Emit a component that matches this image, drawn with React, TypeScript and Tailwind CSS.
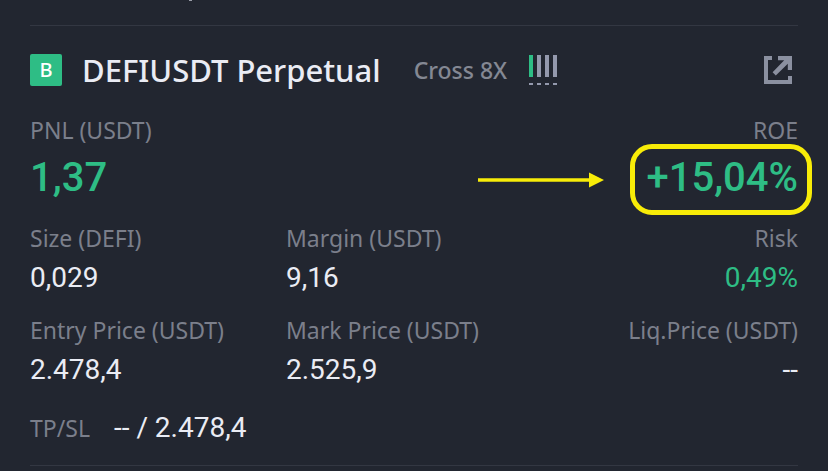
import clsx from "clsx";

type StatProps = {
  label: string;
  value: string;
  alignRight?: boolean;
  positive?: boolean;
};

const Stat: React.FC<StatProps> = ({ label, value, alignRight, positive }) => {
  return (
    <div className={clsx("whitespace-nowrap", alignRight && "text-right")}>
      <dt className="text-[23px] leading-10 text-[#7b7f8b]">{label}</dt>
      <dd
        className={clsx(
          "font-['Roboto',sans-serif] text-[28px] leading-10",
          positive ? "text-[#2ebd85]" : "text-[#eaecf4]"
        )}>
        {value}
      </dd>
    </div>
  );
};

const LeverageBars = () => {
  return (
    <svg width="30" height="30" viewBox="0 0 30 30" aria-hidden="true">
      <path d="M0 0h4v22H0z" fill="#2ebd85" />
      <path d="M8 0h4v22H8zM16 0h4v22h-4zM24 0h4v22h-4z" fill="#9499ad" />
      <path
        d="M0 28h4v2H0zM8 28h4v2H8zM16 28h4v2h-4zM24 28h4v2h-4z"
        fill="#9499ad"
      />
    </svg>
  );
};

const ShareIcon = () => {
  return (
    <svg width="28" height="28" viewBox="0 0 28 28" aria-hidden="true">
      <path
        d="M0 0h8v4H4v20h20v-4h4v8H0zM14 0h14v14h-4.2V7.8L11.8 19.4 8.6 16.2 20.2 4.2H14z"
        fill="#8b90a0"
      />
    </svg>
  );
};

const Arrow = () => {
  return (
    <svg width="126" height="16" viewBox="0 0 126 16" aria-hidden="true">
      <path d="M0 6.2h111V0.6L126 8l-15 7.4V9.8H0z" fill="#f8ec08" />
    </svg>
  );
};

const App = () => {
  return (
    <main className="min-h-screen bg-[#222630] px-[30px] font-['Noto_Sans',sans-serif]">
      {/* tail of the previous position, scrolled out of view */}
      <div className="h-[25px] pl-[159px]">
        <div className="h-px w-[3px] bg-[#9a9da8]" />
      </div>

      <section className="border-y border-[#333742] pb-[15px]">
        <header className="flex h-[88px] items-center whitespace-nowrap">
          <span className="flex h-8 w-8 items-center justify-center rounded-xs bg-[#2ebd85] text-xl font-medium text-white">
            B
          </span>
          <h1 className="ml-5 text-[31px] font-medium text-[#eaecf4]">
            DEFIUSDT Perpetual
          </h1>
          <span className="mr-[22px] ml-[33px] text-[23px] font-medium text-[#848893]">
            Cross 8X
          </span>
          <LeverageBars />
          <button
            type="button"
            aria-label="Share position"
            className="mr-1.5 ml-auto cursor-pointer">
            <ShareIcon />
          </button>
        </header>

        <dl className="flex items-start justify-between whitespace-nowrap">
          <div>
            <dt className="text-[23px] leading-8 text-[#7b7f8b]">PNL (USDT)</dt>
            <dd className="font-['Roboto',sans-serif] text-[40px] leading-[64px] font-medium text-[#2ebd85]">
              1,37
            </dd>
          </div>
          <div className="relative text-right">
            <dt className="text-[23px] leading-8 text-[#7b7f8b]">ROE</dt>
            <dd className="font-['Roboto',sans-serif] text-[40px] leading-[64px] font-medium text-[#2ebd85]">
              +15,04%
            </dd>
            <div className="absolute top-[30px] -right-[14px] flex items-center gap-[26px]">
              <Arrow />
              <div className="h-[71px] w-[182px] rounded-[22px] border-[5px] border-[#f8ec08]" />
            </div>
          </div>
        </dl>

        <dl className="mt-2 grid grid-cols-3 gap-y-3">
          <Stat label="Size (DEFI)" value="0,029" />
          <Stat label="Margin (USDT)" value="9,16" />
          <Stat label="Risk" value="0,49%" alignRight positive />
          <Stat label="Entry Price (USDT)" value="2.478,4" />
          <Stat label="Mark Price (USDT)" value="2.525,9" />
          <Stat label="Liq.Price (USDT)" value="--" alignRight />
        </dl>

        <dl className="mt-4 flex items-center gap-6">
          <dt className="text-[23px] leading-10 text-[#7b7f8b]">TP/SL</dt>
          <dd className="font-['Roboto',sans-serif] text-[28px] leading-11 text-[#eaecf4]">
            -- / 2.478,4
          </dd>
        </dl>
      </section>
    </main>
  );
};

export default App;
